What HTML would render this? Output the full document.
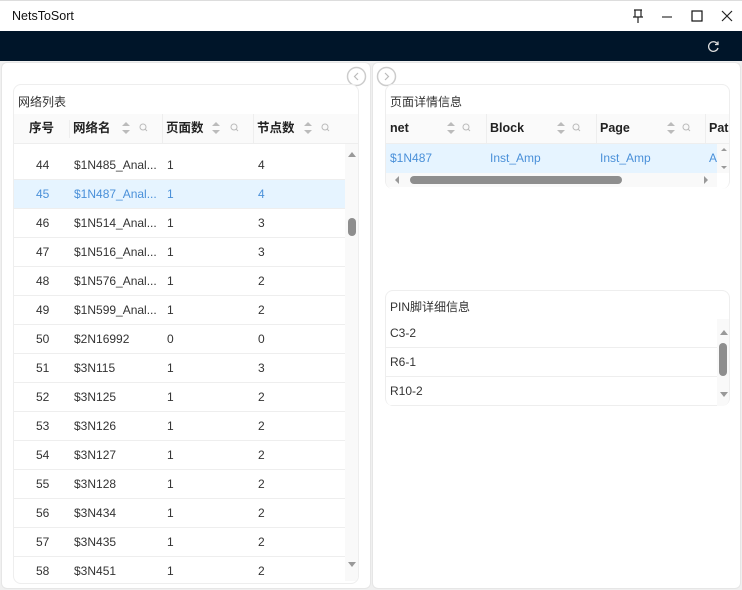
<!DOCTYPE html>
<html><head><meta charset="utf-8"><style>
*{box-sizing:border-box;margin:0;padding:0}
body{width:742px;height:590px;overflow:hidden;background:#f0f0f0;font-family:"Liberation Sans","Noto Sans CJK SC",sans-serif;font-size:12px;color:#333;position:relative}
.abs{position:absolute}
.title{left:0;top:0;width:742px;height:31px;background:#fff;border-top:1px solid #ddd}
.dark{left:0;top:31px;width:742px;height:30px;background:#001529}
.panel{background:#fff;border:1px solid #e6e6e6;border-radius:6px}
.card{background:#fff;border:1px solid #eee;border-radius:8px}
.hdr{background:#fafafa;border-bottom:1px solid #eee;font-weight:bold;color:#222;font-size:12.5px}
.cell{position:absolute;line-height:29px;white-space:nowrap}
.row{position:absolute;height:29px;border-bottom:1px solid #eee;left:0;width:331px}
.sel{background:#e6f4ff;color:#4a90d9}
</style></head><body>
<div class="abs title"><span class="abs" style="left:12px;top:8px;font-size:12.5px;color:#111">NetsToSort</span>
<svg class="abs" style="left:630px;top:7px" width="16" height="16" viewBox="0 0 16 16" fill="none" stroke="#222" stroke-width="1.2"><path d="M4 2h8M5 2v7M11 2v7M3 9h10M8 9v6"/></svg>
<svg class="abs" style="left:660px;top:8px" width="14" height="14"><path d="M2 8h10" stroke="#333" stroke-width="1.2"/></svg>
<svg class="abs" style="left:691px;top:9px" width="12" height="12"><rect x="1" y="1" width="10" height="10" fill="none" stroke="#111" stroke-width="1.2"/></svg>
<svg class="abs" style="left:721px;top:9px" width="12" height="12"><path d="M1 1l10 10M11 1L1 11" stroke="#222" stroke-width="1.2"/></svg>
</div>
<div class="abs dark"><svg class="abs" style="left:707px;top:9px" width="13" height="13" viewBox="0 0 13 13" fill="none" stroke="#ddd" stroke-width="1.3"><path d="M10.5 4A4.8 4.8 0 1 0 11 8"/><path d="M11 1.5v3h-3"/></svg></div>

<div class="abs panel" style="left:1px;top:62px;width:370px;height:527px"></div>
<div class="abs panel" style="left:372px;top:62px;width:369px;height:527px"></div>
<svg class="abs" style="left:346px;top:66px" width="21" height="21" fill="#fff" stroke="#ccc" stroke-width="1.5"><circle cx="10.5" cy="10.5" r="9"/><path d="M12 7l-3.5 3.5L12 14" fill="none" stroke="#bbb" stroke-width="1.2"/></svg>
<svg class="abs" style="left:376px;top:66px" width="21" height="21" fill="#fff" stroke="#ccc" stroke-width="1.5"><circle cx="10.5" cy="10.5" r="9"/><path d="M9 7l3.5 3.5L9 14" fill="none" stroke="#bbb" stroke-width="1.2"/></svg>

<div class="abs card" style="left:13px;top:84px;width:346px;height:500px;overflow:hidden">
 <div class="abs" style="left:4px;top:8px;font-size:12px">网络列表</div>
 <div class="abs hdr" style="left:0;top:29px;width:346px;height:30px">
  <span class="cell" style="left:15px">序号</span>
  <span class="abs" style="left:55px;top:6px;height:18px;border-left:1px solid #eee"></span>
  <span class="cell" style="left:59px">网络名</span>
  <span class="abs" style="left:148px;top:0;height:30px;border-left:1px solid #eee"></span>
  <span class="cell" style="left:152px">页面数</span>
  <span class="abs" style="left:239px;top:0;height:30px;border-left:1px solid #eee"></span>
  <span class="cell" style="left:243px">节点数</span>
 </div>
 <div class="abs" style="left:0;top:66px;width:331px;height:430px;overflow:hidden">
  <div class="row" style="top:0"><span class="cell" style="left:22px">44</span><span class="cell" style="left:60px">$1N485_Anal...</span><span class="cell" style="left:153px">1</span><span class="cell" style="left:244px">4</span></div>
  <div class="row sel" style="top:29px"><span class="cell" style="left:22px">45</span><span class="cell" style="left:60px">$1N487_Anal...</span><span class="cell" style="left:153px">1</span><span class="cell" style="left:244px">4</span></div>
  <div class="row" style="top:58px"><span class="cell" style="left:22px">46</span><span class="cell" style="left:60px">$1N514_Anal...</span><span class="cell" style="left:153px">1</span><span class="cell" style="left:244px">3</span></div>
  <div class="row" style="top:87px"><span class="cell" style="left:22px">47</span><span class="cell" style="left:60px">$1N516_Anal...</span><span class="cell" style="left:153px">1</span><span class="cell" style="left:244px">3</span></div>
  <div class="row" style="top:116px"><span class="cell" style="left:22px">48</span><span class="cell" style="left:60px">$1N576_Anal...</span><span class="cell" style="left:153px">1</span><span class="cell" style="left:244px">2</span></div>
  <div class="row" style="top:145px"><span class="cell" style="left:22px">49</span><span class="cell" style="left:60px">$1N599_Anal...</span><span class="cell" style="left:153px">1</span><span class="cell" style="left:244px">2</span></div>
  <div class="row" style="top:174px"><span class="cell" style="left:22px">50</span><span class="cell" style="left:60px">$2N16992</span><span class="cell" style="left:153px">0</span><span class="cell" style="left:244px">0</span></div>
  <div class="row" style="top:203px"><span class="cell" style="left:22px">51</span><span class="cell" style="left:60px">$3N115</span><span class="cell" style="left:153px">1</span><span class="cell" style="left:244px">3</span></div>
  <div class="row" style="top:232px"><span class="cell" style="left:22px">52</span><span class="cell" style="left:60px">$3N125</span><span class="cell" style="left:153px">1</span><span class="cell" style="left:244px">2</span></div>
  <div class="row" style="top:261px"><span class="cell" style="left:22px">53</span><span class="cell" style="left:60px">$3N126</span><span class="cell" style="left:153px">1</span><span class="cell" style="left:244px">2</span></div>
  <div class="row" style="top:290px"><span class="cell" style="left:22px">54</span><span class="cell" style="left:60px">$3N127</span><span class="cell" style="left:153px">1</span><span class="cell" style="left:244px">2</span></div>
  <div class="row" style="top:319px"><span class="cell" style="left:22px">55</span><span class="cell" style="left:60px">$3N128</span><span class="cell" style="left:153px">1</span><span class="cell" style="left:244px">2</span></div>
  <div class="row" style="top:348px"><span class="cell" style="left:22px">56</span><span class="cell" style="left:60px">$3N434</span><span class="cell" style="left:153px">1</span><span class="cell" style="left:244px">2</span></div>
  <div class="row" style="top:377px"><span class="cell" style="left:22px">57</span><span class="cell" style="left:60px">$3N435</span><span class="cell" style="left:153px">1</span><span class="cell" style="left:244px">2</span></div>
  <div class="row" style="top:406px"><span class="cell" style="left:22px">58</span><span class="cell" style="left:60px">$3N451</span><span class="cell" style="left:153px">1</span><span class="cell" style="left:244px">2</span></div>
 </div>
 <div class="abs" style="left:331px;top:59px;width:15px;height:437px;background:#f9f9f9"></div>
 <svg class="abs" style="left:332px;top:64px" width="12" height="10"><path d="M2 8l4-5 4 5z" fill="#999"/></svg>
 <div class="abs" style="left:334px;top:133px;width:8px;height:18px;border-radius:4px;background:#8e8e8e"></div>
 <svg class="abs" style="left:332px;top:475px" width="12" height="10"><path d="M2 2l4 5 4-5z" fill="#999"/></svg>
</div>
<svg class="abs" style="left:0;top:114px" width="360" height="30" fill="#bbb" stroke="#bbb">
 <path d="M122 12l4-4 4 4zM122 16l4 4 4-4z" stroke="none"/><circle cx="143" cy="13" r="3" fill="none"/><path d="M145 15l2 2"/>
 <path d="M212 12l4-4 4 4zM212 16l4 4 4-4z" stroke="none"/><circle cx="234" cy="13" r="3" fill="none"/><path d="M236 15l2 2"/>
 <path d="M304 12l4-4 4 4zM304 16l4 4 4-4z" stroke="none"/><circle cx="325" cy="13" r="3" fill="none"/><path d="M327 15l2 2"/>
</svg>

<div class="abs card" style="left:385px;top:84px;width:345px;height:105px;overflow:hidden;border-bottom:none">
 <div class="abs" style="left:4px;top:8px">页面详情信息</div>
 <div class="abs hdr" style="left:0;top:29px;width:345px;height:30px">
  <span class="cell" style="left:4px">net</span>
  <span class="abs" style="left:100px;top:0;height:30px;border-left:1px solid #eee"></span>
  <span class="cell" style="left:104px">Block</span>
  <span class="abs" style="left:210px;top:0;height:30px;border-left:1px solid #eee"></span>
  <span class="cell" style="left:214px">Page</span>
  <span class="abs" style="left:319px;top:0;height:30px;border-left:1px solid #eee"></span>
  <span class="cell" style="left:323px">Path</span>
 </div>
 <div class="abs sel" style="left:0;top:59px;width:331px;height:29px">
  <span class="cell" style="left:4px">$1N487</span><span class="cell" style="left:104px">Inst_Amp</span><span class="cell" style="left:214px">Inst_Amp</span><span class="cell" style="left:323px">A</span>
 </div>
 <div class="abs" style="left:331px;top:59px;width:14px;height:29px;background:#f9f9f9"></div>
 <svg class="abs" style="left:332px;top:60px" width="12" height="28"><path d="M3 6l3-3 3 3zM3 21l3 3 3-3z" fill="#999"/></svg>
 <div class="abs" style="left:0;top:88px;width:331px;height:14px;background:#f9f9f9"></div>
 <svg class="abs" style="left:8px;top:90px" width="320" height="10"><path d="M5 1l-4 4 4 4z" fill="#999"/><path d="M310 1l4 4-4 4z" fill="#999"/></svg>
 <div class="abs" style="left:24px;top:91px;width:212px;height:8px;border-radius:4px;background:#8e8e8e"></div>
</div>
<svg class="abs" style="left:385px;top:114px" width="345" height="30" fill="#bbb" stroke="#bbb">
 <path d="M62 12l4-4 4 4zM62 16l4 4 4-4z" stroke="none"/><circle cx="81" cy="13" r="3" fill="none"/><path d="M83 15l2 2"/>
 <path d="M172 12l4-4 4 4zM172 16l4 4 4-4z" stroke="none"/><circle cx="191" cy="13" r="3" fill="none"/><path d="M193 15l2 2"/>
 <path d="M282 12l4-4 4 4zM282 16l4 4 4-4z" stroke="none"/><circle cx="301" cy="13" r="3" fill="none"/><path d="M303 15l2 2"/>
</svg>

<div class="abs card" style="left:385px;top:290px;width:345px;height:116px;overflow:hidden;border-bottom:none">
 <div class="abs" style="left:4px;top:7px">PIN脚详细信息</div>
 <div class="row" style="top:28px;width:331px;left:0"><span class="cell" style="left:4px">C3-2</span></div>
 <div class="row" style="top:57px;width:331px;left:0"><span class="cell" style="left:4px">R6-1</span></div>
 <div class="row" style="top:86px;width:331px;left:0"><span class="cell" style="left:4px">R10-2</span></div>
 <div class="abs" style="left:331px;top:28px;width:14px;height:88px;background:#f9f9f9"></div>
 <svg class="abs" style="left:332px;top:36px" width="12" height="10"><path d="M2 8l4-5 4 5z" fill="#999"/></svg>
 <div class="abs" style="left:333px;top:52px;width:8px;height:33px;border-radius:4px;background:#8e8e8e"></div>
 <svg class="abs" style="left:332px;top:99px" width="12" height="10"><path d="M2 2l4 5 4-5z" fill="#999"/></svg>
</div>
</body></html>
